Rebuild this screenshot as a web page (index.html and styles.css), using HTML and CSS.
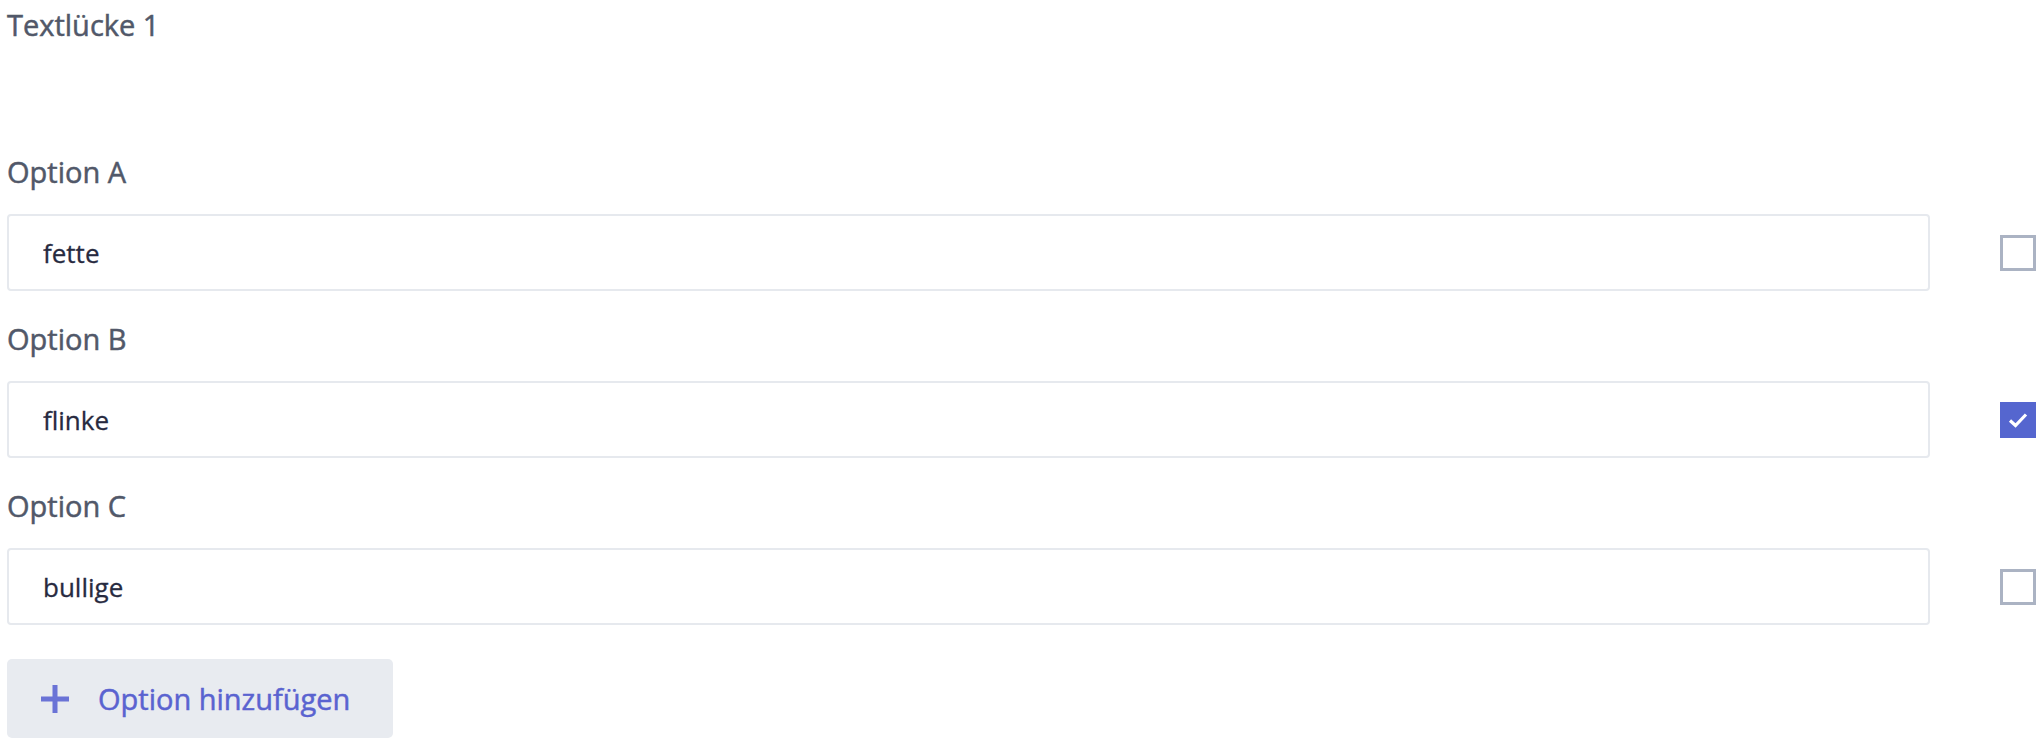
FILE: index.html
```html
<!DOCTYPE html>
<html lang="de">
<head>
  <meta charset="UTF-8" />
  <meta name="viewport" content="width=device-width, initial-scale=1.0"/>
  <title>Textlücke</title>
  <link rel="stylesheet" href="styles.css">
</head>
<body>

  <div class="gap-editor">
    <h3 class="gap-title">Textlücke 1</h3>

    <div class="option">
      <label class="option-label">Option A</label>
      <div class="option-row">
        <input class="option-input" type="text" value="fette" />
        <span class="check"></span>
      </div>
    </div>

    <div class="option">
      <label class="option-label">Option B</label>
      <div class="option-row">
        <input class="option-input" type="text" value="flinke" />
        <span class="check checked">
          <svg viewBox="0 0 36 36" width="36" height="36">
            <path d="M10 18.5 L15.5 23.5 L26 12.5" fill="none" stroke="#fff" stroke-width="3.2" />
          </svg>
        </span>
      </div>
    </div>

    <div class="option">
      <label class="option-label">Option C</label>
      <div class="option-row">
        <input class="option-input" type="text" value="bullige" />
        <span class="check"></span>
      </div>
    </div>

    <button class="add-btn" type="button">
      <svg viewBox="0 0 30 30" width="30" height="30">
        <path d="M15 1 V29 M1 15 H29" stroke="#6a73d6" stroke-width="5" />
      </svg>
      Option hinzufügen
    </button>
  </div>

</body>
</html>
```

FILE: styles.css
```css
body {
  font-family: 'Open Sans', sans-serif;
  margin: 0;
  padding: 5px 8px 0 7px;
  background: #ffffff;
}

.gap-title {
  margin: 0 0 107px 0;
  font-size: 29px;
  line-height: 40px;
  font-weight: normal;
  color: #515869;
  -webkit-text-stroke: 0.5px #515869;
}

.option {
  margin-bottom: 28px;
}

.option-label {
  display: block;
  margin-bottom: 22px;
  font-size: 29px;
  line-height: 40px;
  color: #515869;
  -webkit-text-stroke: 0.5px #515869;
}

.option-row {
  display: flex;
  align-items: center;
  gap: 70px;
}

.option-input {
  flex: 1;
  height: 77px;
  box-sizing: border-box;
  border: 2.5px solid #e6e9ee;
  border-radius: 4px;
  padding: 0 0 0 34px;
  font-family: 'Open Sans', sans-serif;
  font-size: 26px;
  color: #272a3f;
  -webkit-text-stroke: 0.3px #272a3f;
  background: #fff;
  outline: none;
}

.check {
  width: 36px;
  height: 36px;
  box-sizing: border-box;
  border: 3px solid #abb3c3;
  background: #fff;
  flex-shrink: 0;
  display: block;
}

.check.checked {
  border: none;
  background: #5566cf;
}

.check svg {
  display: block;
}

.add-btn {
  display: flex;
  align-items: center;
  gap: 28px;
  width: 386px;
  height: 79px;
  margin-top: 34px;
  padding: 0 0 0 33px;
  border: none;
  border-radius: 5px;
  background: #e8ebf0;
  font-family: 'Open Sans', sans-serif;
  font-size: 29px;
  color: #5a63d0;
  -webkit-text-stroke: 0.5px #5a63d0;
  cursor: pointer;
}

.add-btn svg {
  display: block;
}
```
